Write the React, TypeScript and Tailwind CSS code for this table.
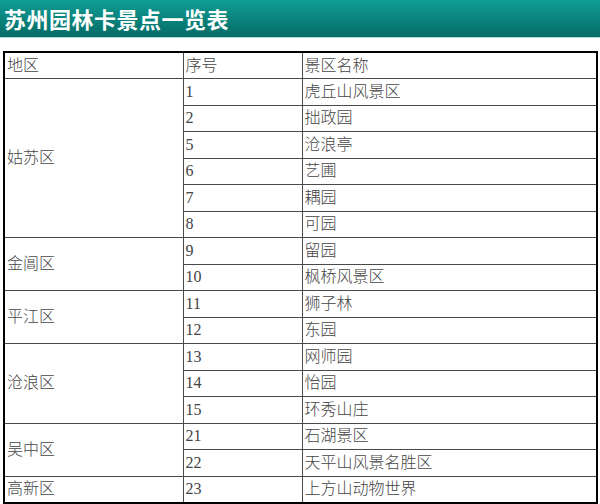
const groups = [
  {
    area: '姑苏区',
    items: [
      ['1', '虎丘山风景区'],
      ['2', '拙政园'],
      ['5', '沧浪亭'],
      ['6', '艺圃'],
      ['7', '耦园'],
      ['8', '可园'],
    ],
  },
  {
    area: '金阊区',
    items: [
      ['9', '留园'],
      ['10', '枫桥风景区'],
    ],
  },
  {
    area: '平江区',
    items: [
      ['11', '狮子林'],
      ['12', '东园'],
    ],
  },
  {
    area: '沧浪区',
    items: [
      ['13', '网师园'],
      ['14', '怡园'],
      ['15', '环秀山庄'],
    ],
  },
  {
    area: '吴中区',
    items: [
      ['21', '石湖景区'],
      ['22', '天平山风景名胜区'],
    ],
  },
  {
    area: '高新区',
    items: [['23', '上方山动物世界']],
  },
];

const cell = 'border border-[#4a4a4a] h-[26.5px] px-[2px] py-0 text-left align-middle leading-none';

export default function App() {
  return (
    <div className="w-[600px] h-[504px] bg-white overflow-hidden font-['Liberation_Serif','Noto_Sans_CJK_SC',serif]">
      <div className="h-[38px] bg-gradient-to-b from-[#0f9d95] to-[#066c66] border-b border-[#a9dcdc] flex items-center px-[4px]">
        <h1 className="text-white text-[22px] font-bold tracking-[0.5px] font-['Noto_Sans_CJK_SC',serif]">
          苏州园林卡景点一览表
        </h1>
      </div>
      <div className="pt-[13px] px-[3px]">
        <table className="w-[595px] border-collapse border-2 border-black text-[16px] font-light text-[#444444]">
          <colgroup>
            <col className="w-[179px]" />
            <col className="w-[119px]" />
            <col />
          </colgroup>
          <tbody>
            <tr>
              <td className={cell}>地区</td>
              <td className={cell}>序号</td>
              <td className={cell}>景区名称</td>
            </tr>
            {groups.map((g) =>
              g.items.map(([num, name], i) => (
                <tr key={num}>
                  {i === 0 && (
                    <td className={cell} rowSpan={g.items.length}>
                      {g.area}
                    </td>
                  )}
                  <td className={cell}>{num}</td>
                  <td className={cell}>{name}</td>
                </tr>
              ))
            )}
          </tbody>
        </table>
      </div>
    </div>
  );
}
